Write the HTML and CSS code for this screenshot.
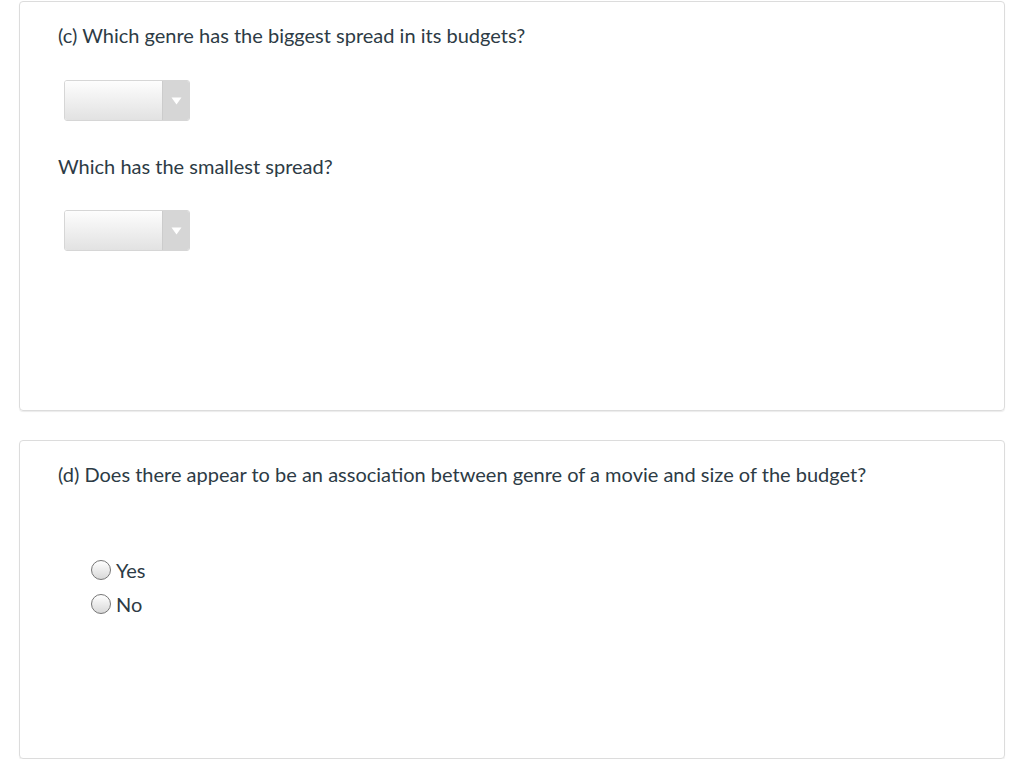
FILE: index.html
```html
<!DOCTYPE html>
<html>
<head>
<meta charset="utf-8">
<link rel="stylesheet" href="styles.css">
</head>
<body>
<div class="page">
  <section class="card card-c">
    <p class="q">(c) Which genre has the biggest spread in its budgets?</p>
    <div class="select sel-1"><span class="sel-value"></span><span class="sel-arrow"><svg width="11" height="8" viewBox="0 0 11 8"><path d="M0.5 0.5 L10.5 0.5 L5.5 7.5 Z" fill="#fff"/></svg></span></div>
    <p class="q q2">Which has the smallest spread?</p>
    <div class="select sel-2"><span class="sel-value"></span><span class="sel-arrow"><svg width="11" height="8" viewBox="0 0 11 8"><path d="M0.5 0.5 L10.5 0.5 L5.5 7.5 Z" fill="#fff"/></svg></span></div>
  </section>
  <section class="card card-d">
    <p class="q">(d) Does there appear to be an association between genre of a movie and size of the budget?</p>
    <ul class="options">
      <li class="opt"><span class="radio"></span><span class="label">Yes</span></li>
      <li class="opt"><span class="radio"></span><span class="label">No</span></li>
    </ul>
  </section>
</div>
</body>
</html>
```
FILE: styles.css
```css
html, body {
  margin: 0;
  padding: 0;
  background: #fff;
}
body {
  font-family: Lato, "Open Sans", sans-serif;
  color: #2d3b45;
}
.page {
  padding: 1px 19px 0 19px;
  display: flex;
  flex-direction: column;
  gap: 29px;
  width: 986px;
}
.card {
  box-sizing: border-box;
  border: 1px solid #dcdcdc;
  border-radius: 4px;
  box-shadow: 0 1px 1px rgba(0,0,0,0.08);
  padding: 19px 38px 0 38px;
}
.card-c { height: 410px; }
.card-d { height: 319px; padding-top: 19px; }
.q {
  margin: 0;
  font-size: 20px;
  line-height: 28px;
}
.q2 { margin-top: 31px; }
.select {
  margin: 31px 0 0 6px;
  width: 126px;
  height: 41px;
  box-sizing: border-box;
  border: 1px solid #d6d6d6;
  border-radius: 3px;
  display: flex;
  overflow: hidden;
}
.sel-2 { margin-top: 30px; }
.sel-value {
  flex: 1;
  background: linear-gradient(#fdfdfd, #e2e2e2);
}
.sel-arrow {
  width: 26px;
  background: #d6d6d6;
  border-left: 1px solid #cccccc;
  display: flex;
  align-items: center;
  justify-content: center;
}
.sel-arrow svg { display: block; }
.options {
  list-style: none;
  margin: 68px 0 0 33px;
  padding: 0;
  display: flex;
  flex-direction: column;
  gap: 6px;
}
.opt {
  display: flex;
  align-items: center;
  height: 28px;
  font-size: 20px;
}
.radio {
  width: 20px;
  height: 20px;
  box-sizing: border-box;
  border: 1px solid #767676;
  border-radius: 50%;
  background: linear-gradient(#ffffff, #d8d8d8);
  margin-right: 5px;
}
.label { line-height: 28px; }
```
